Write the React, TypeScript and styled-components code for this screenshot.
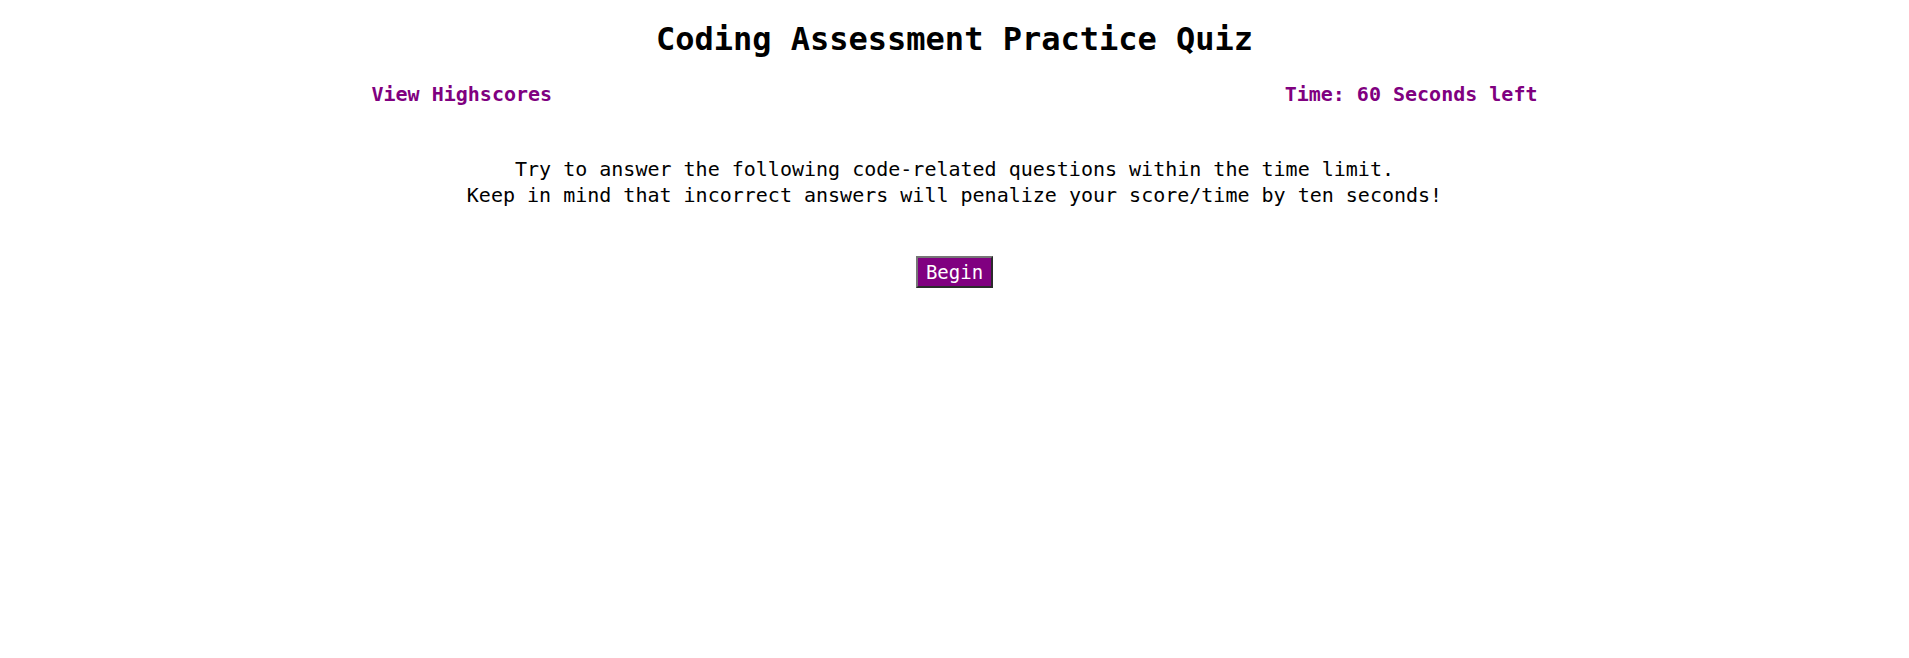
import React from "react";
import styled, { createGlobalStyle } from "styled-components";

const GlobalStyle = createGlobalStyle`
  html, body {
    margin: 0;
    padding: 0;
    background: #ffffff;
  }
  body {
    font-family: "DejaVu Sans Mono", "Liberation Mono", monospace;
    color: #000000;
  }
`;

const Page = styled.div`
  display: flex;
  flex-direction: column;
  align-items: center;
  padding-top: 21px;
`;

const Title = styled.h1`
  margin: 0;
  font-size: 32px;
  line-height: 37px;
  font-weight: bold;
  text-align: center;
`;

const Header = styled.div`
  width: 1166px;
  display: flex;
  justify-content: space-between;
  align-items: center;
  margin-top: 25px;
`;

const HeaderItem = styled.a`
  color: #800080;
  font-size: 20px;
  line-height: 23px;
  font-weight: bold;
  text-decoration: none;
  cursor: pointer;
`;

const Intro = styled.p`
  margin: 50px 0 0;
  font-size: 20px;
  line-height: 26px;
  text-align: center;
`;

const BeginButton = styled.button`
  margin-top: 48px;
  font-family: inherit;
  font-size: 19px;
  line-height: 22px;
  color: #ffffff;
  background: #800080;
  border: 2px solid;
  border-color: #767676 #2b2b2b #2b2b2b #767676;
  padding: 3px 8px;
  cursor: pointer;
`;

export default function App() {
  return (
    <>
      <GlobalStyle />
      <Page>
        <Title>Coding Assessment Practice Quiz</Title>
        <Header>
          <HeaderItem>View Highscores</HeaderItem>
          <HeaderItem>Time: 60 Seconds left</HeaderItem>
        </Header>
        <Intro>
          Try to answer the following code-related questions within the time limit.
          <br />
          Keep in mind that incorrect answers will penalize your score/time by ten seconds!
        </Intro>
        <BeginButton>Begin</BeginButton>
      </Page>
    </>
  );
}
